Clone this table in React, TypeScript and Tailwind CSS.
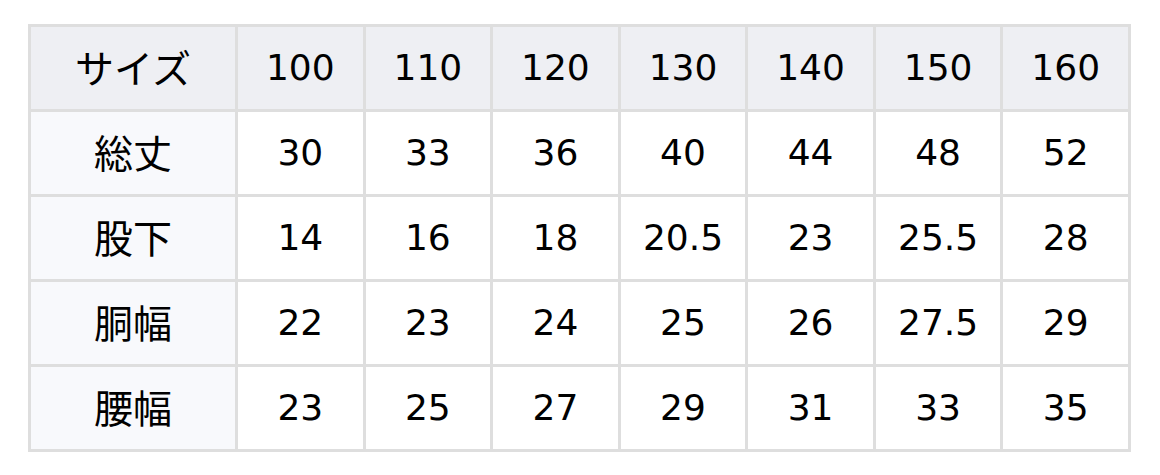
const headers = ['100', '110', '120', '130', '140', '150', '160'];

const rows: [string, string[]][] = [
  ['総丈', ['30', '33', '36', '40', '44', '48', '52']],
  ['股下', ['14', '16', '18', '20.5', '23', '25.5', '28']],
  ['胴幅', ['22', '23', '24', '25', '26', '27.5', '29']],
  ['腰幅', ['23', '25', '27', '29', '31', '33', '35']],
];

const jp = "font-['Noto_Sans_CJK_JP',sans-serif] text-[39px] leading-none";
const num = "font-['DejaVu_Sans','Noto_Sans_CJK_JP',sans-serif] text-[36px] leading-none";

export default function App() {
  return (
    <div className="bg-white min-h-screen pt-[24px] pl-[28px] text-black">
      <div className="w-[1103px] grid grid-cols-[204px_repeat(7,1fr)] auto-rows-[82px] gap-[3px] p-[3px] bg-[#dedede]">
        <div className={`bg-[#eeeff3] flex items-center justify-center pb-[4px] ${jp}`}>サイズ</div>
        {headers.map((h) => (
          <div key={h} className={`bg-[#eeeff3] flex items-center justify-center ${num}`}>
            {h}
          </div>
        ))}
        {rows.map(([label, vals]) => (
          <>
            <div key={label} className={`bg-[#f8f9fc] flex items-center justify-center pb-[4px] ${jp}`}>
              {label}
            </div>
            {vals.map((v, i) => (
              <div key={label + i} className={`bg-white flex items-center justify-center ${num}`}>
                {v}
              </div>
            ))}
          </>
        ))}
      </div>
    </div>
  );
}
